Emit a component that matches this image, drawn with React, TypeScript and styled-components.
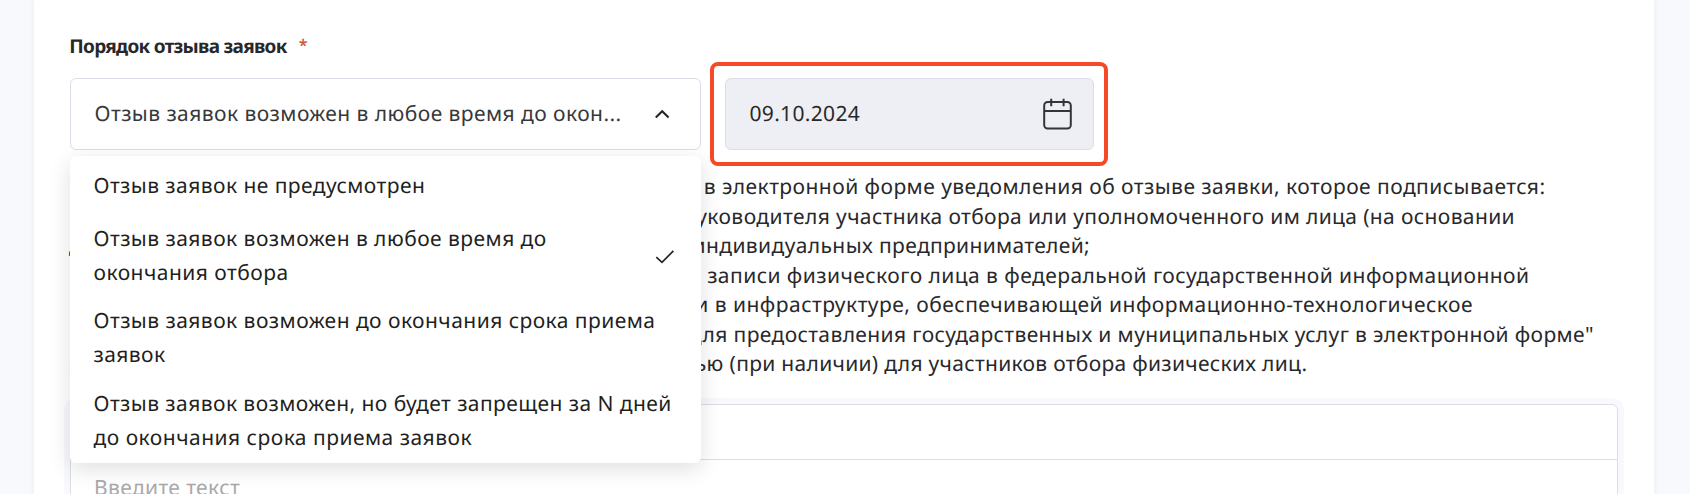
import React from 'react';
import styled, { createGlobalStyle } from 'styled-components';

const GlobalStyle = createGlobalStyle`
  *, *::before, *::after { box-sizing: border-box; }
  body {
    margin: 0;
    overflow: hidden;
    background: #f8f9fc;
    color: #28282b;
    font-family: 'Noto Sans', 'Open Sans', sans-serif;
    font-size: 21px;
    text-rendering: geometricPrecision;
    -webkit-font-smoothing: antialiased;
  }
`;

const Page = styled.div`
  height: 494px;
  padding: 0 36px 0 34px;
  overflow: hidden;
`;

const Panel = styled.main`
  height: 560px;
  padding: 34px 36px 0;
  background: #fff;
  box-shadow: 0 0 6px rgba(40, 50, 80, 0.07);
`;

const Label = styled.label`
  display: flex;
  gap: 12px;
  height: 44px;
  margin-left: -0.7px;
  font-size: 19px;
  font-weight: 700;
  line-height: 25px;
  letter-spacing: -0.72px;
`;

const Required = styled.span`
  color: #cc5a42;
  font-size: 16px;
  font-weight: 600;
  line-height: 23px;
`;

const FieldRow = styled.div`
  display: flex;
  gap: 24px;
`;

const SelectWrap = styled.div`
  position: relative;
  width: 631px;
`;

const Field = styled.div<{ $disabled?: boolean }>`
  display: flex;
  align-items: center;
  justify-content: space-between;
  height: 72px;
  padding: 0 21px 0 23.5px;
  border: 1px solid #dcdde6;
  border-radius: 6px;
  background: ${(p) => (p.$disabled ? '#eeeff4' : '#fff')};
  white-space: nowrap;
`;

const Text = styled.span<{ $tracking: number }>`
  letter-spacing: ${(p) => p.$tracking}px;
  white-space: pre;
`;

const SelectValue = styled(Text)`
  color: #38383b;
`;

const DateWrap = styled.div`
  position: relative;
  width: 369px;
`;

const Highlight = styled.div`
  position: absolute;
  inset: -16px -14px -16px -15px;
  border: 4px solid #f54927;
  border-radius: 8px;
  pointer-events: none;
`;

const Menu = styled.div`
  position: absolute;
  z-index: 2;
  top: 78px;
  left: 0;
  width: 631px;
  height: 307px;
  padding-top: 1px;
  border-radius: 6px;
  background: #fff;
  color: #1f1f22;
  box-shadow: 0 6px 22px rgba(0, 0, 0, 0.13);
`;

const Option = styled.div<{ $height: number }>`
  display: flex;
  align-items: center;
  justify-content: space-between;
  height: ${(p) => p.$height}px;
  padding: 0 24px 0 23.5px;
  line-height: 34px;
`;

const OptionText = styled.div`
  display: flex;
  flex-direction: column;
`;

const Note = styled.div`
  padding-top: 23.2px;
`;

const NoteLine = styled.div<{ $width: number }>`
  display: flex;
  justify-content: space-between;
  width: ${(p) => p.$width}px;
  height: 29.55px;
  margin-left: -1px;
  line-height: 29.55px;
`;

const NoteTail = styled.span`
  display: flex;
  margin-left: auto;
`;

const Editor = styled.div`
  height: 150px;
  margin-top: 24px;
  border: 1px solid #dcdde6;
  border-radius: 6px;
  box-shadow: 0 0 0 6px #f8f9fc;
`;

const Toolbar = styled.div`
  height: 55px;
  border-bottom: 1px solid #dcdde6;
`;

const Placeholder = styled.div`
  padding: 11px 22.9px;
  color: #a9a9a9;
  line-height: 34px;
`;

const ChevronIcon = styled.svg`
  width: 20px;
  height: 16px;
  margin-right: 7px;
`;

const CalendarIcon = styled.svg`
  width: 32px;
  height: 34px;
  margin-right: -2px;
`;

const CheckIcon = styled.svg`
  width: 20px;
  height: 16px;
  margin-right: 2px;
`;

type Run = [text: string, tracking: number];

const options: { height: number; lines: Run[]; selected?: boolean }[] = [
  { height: 57.4, lines: [['Отзыв заявок не предусмотрен', 0.439]] },
  {
    height: 82.5,
    lines: [['Отзыв заявок возможен в любое время до', 0.455], ['окончания отбора', 0.47]],
    selected: true,
  },
  { height: 82.5, lines: [['Отзыв заявок возможен до окончания срока приема', 0.455], ['заявок', 0.428]] },
  {
    height: 82.5,
    lines: [['Отзыв заявок возможен, но будет запрещен за N дней', 0.435], ['до окончания срока приема заявок', 0.484]],
  },
];

const note: { width: number; lead?: string; runs: Run[] }[] = [
  { width: 1476.5, runs: [['в электронной форме уведомления об отзыве заявки, которое подписывается:', 0.453]] },
  {
    width: 1446,
    runs: [['руководителя ', 0.42], ['участника отбора или уполномоченного им лица (на основании', 0.368]],
  },
  { width: 1021, lead: 'д', runs: [['индивидуальных ', 0.42], ['предпринимателей;', 0.329]] },
  { width: 1460.5, runs: [['записи физического лица в федеральной государственной информационной', 0.45]] },
  { width: 1404, runs: [['и ', 0.45], ['в инфраструктуре, обеспечивающей информационно-технологическое', 0.47]] },
  {
    width: 1525,
    runs: [['для ', 0.4], ['предоставления государственных и муниципальных услуг в электронной форме"', 0.374]],
  },
  { width: 1238.5, lead: 'я', runs: [['подписью ', 0.42], ['(при наличии) для участников отбора физических лиц.', 0.3]] },
];

export default function App() {
  return (
    <Page>
      <GlobalStyle />
      <Panel>
        <Label>
          Порядок отзыва заявок
          <Required>*</Required>
        </Label>
        <FieldRow>
          <SelectWrap>
            <Field>
              <SelectValue $tracking={0.44}>Отзыв заявок возможен в любое время до окон...</SelectValue>
              <ChevronIcon viewBox="0 0 20 16" fill="none" stroke="#242427" strokeWidth="2.1">
                <path d="M3.8 11.4 10.2 5.2l6.4 6.2" />
              </ChevronIcon>
            </Field>
            <Menu>
              {options.map((option) => (
                <Option key={option.lines[0][0]} $height={option.height}>
                  <OptionText>
                    {option.lines.map(([text, tracking]) => (
                      <Text key={text} $tracking={tracking}>{text}</Text>
                    ))}
                  </OptionText>
                  {option.selected && (
                    <CheckIcon viewBox="0 0 20 16" fill="none" stroke="#242427" strokeWidth="1.7">
                      <path d="M1.3 9.2 7 14.4 18.4 2.8" />
                    </CheckIcon>
                  )}
                </Option>
              ))}
            </Menu>
          </SelectWrap>
          <DateWrap>
            <Field $disabled>
              <Text $tracking={0.32}>09.10.2024</Text>
              <CalendarIcon viewBox="0 0 32 34" fill="none" stroke="#34343b" strokeWidth="2">
                <rect x="2.2" y="5" width="26.6" height="26.6" rx="3.5" />
                <path d="M2.2 14H28.8M9.2 1.7v7.6M21.6 1.7v7.6" />
              </CalendarIcon>
            </Field>
            <Highlight />
          </DateWrap>
        </FieldRow>
        <Note>
          {note.map((line) => (
            <NoteLine key={line.width} $width={line.width}>
              {line.lead && <span>{line.lead}</span>}
              <NoteTail>
                {line.runs.map(([text, tracking]) => (
                  <Text key={text} $tracking={tracking}>{text}</Text>
                ))}
              </NoteTail>
            </NoteLine>
          ))}
        </Note>
        <Editor>
          <Toolbar />
          <Placeholder>
            <Text $tracking={0.38}>Введите текст</Text>
          </Placeholder>
        </Editor>
      </Panel>
    </Page>
  );
}
